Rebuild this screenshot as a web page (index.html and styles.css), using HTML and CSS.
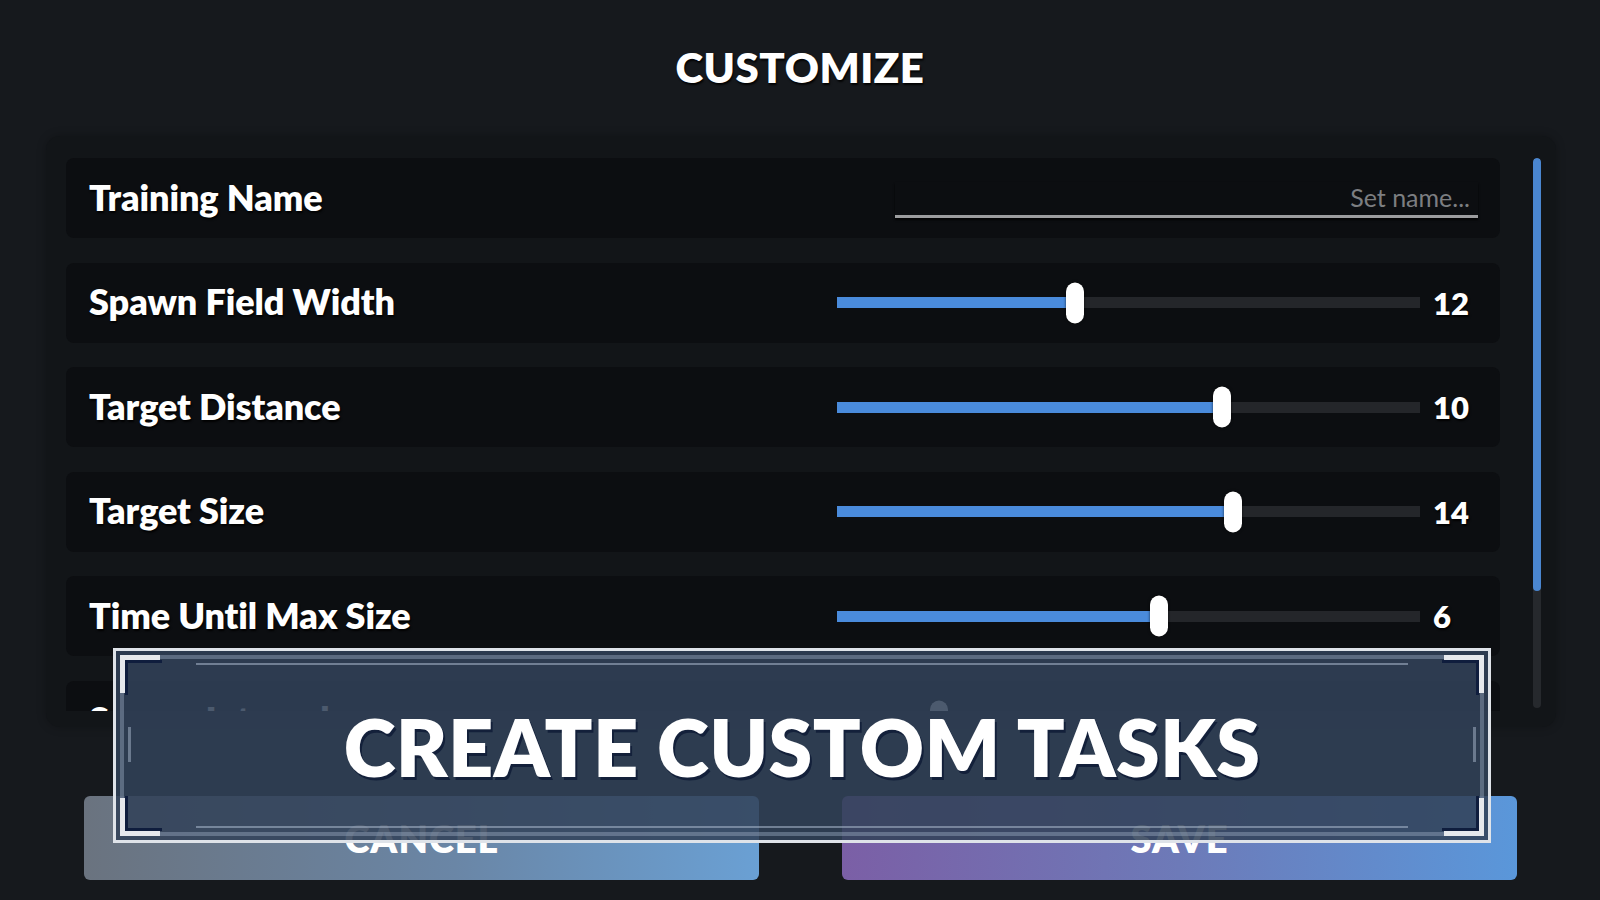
FILE: index.html
```html
<!DOCTYPE html>
<html lang="en">
<head>
<meta charset="utf-8">
<title>Customize</title>
<link rel="stylesheet" href="styles.css">
</head>
<body>
<div class="screen">
  <h1 class="title">CUSTOMIZE</h1>

  <div class="panel">
    <div class="list">
      <div class="row">
        <div class="label">Training Name</div>
        <div class="name-field"><input class="name-input" type="text" placeholder="Set name..."></div>
      </div>
      <div class="row">
        <div class="label">Spawn Field Width</div>
        <div class="slider"><div class="track"><div class="fill" style="width:40.8%"></div><div class="knob" style="left:40.8%"></div></div></div>
        <div class="value">12</div>
      </div>
      <div class="row">
        <div class="label">Target Distance</div>
        <div class="slider"><div class="track"><div class="fill" style="width:66%"></div><div class="knob" style="left:66%"></div></div></div>
        <div class="value">10</div>
      </div>
      <div class="row">
        <div class="label">Target Size</div>
        <div class="slider"><div class="track"><div class="fill" style="width:68%"></div><div class="knob" style="left:68%"></div></div></div>
        <div class="value">14</div>
      </div>
      <div class="row">
        <div class="label">Time Until Max Size</div>
        <div class="slider"><div class="track"><div class="fill" style="width:55.2%"></div><div class="knob" style="left:55.2%"></div></div></div>
        <div class="value">6</div>
      </div>
      <div class="row">
        <div class="label">Spawn Interval</div>
        <div class="slider"><div class="track"><div class="fill" style="width:17.5%"></div><div class="knob" style="left:17.5%"></div></div></div>
        <div class="value">3</div>
      </div>
    </div>
    <div class="scrollbar"><div class="thumb"></div></div>
  </div>

  <div class="actions">
    <button class="btn cancel">CANCEL</button>
    <button class="btn save">SAVE</button>
  </div>

  <div class="banner">
    <div class="banner-frame">
      <span class="corner tl"></span>
      <span class="corner tr"></span>
      <span class="corner bl"></span>
      <span class="corner br"></span>
      <span class="hline top"></span>
      <span class="hline bottom"></span>
      <span class="vmark left"></span>
      <span class="vmark right"></span>
      <div class="banner-text">CREATE CUSTOM TASKS</div>
    </div>
  </div>
</div>
</body>
</html>
```

FILE: styles.css
```css
* { box-sizing: border-box; }

html, body {
  margin: 0;
  padding: 0;
  background: #16191d;
}

.screen {
  position: relative;
  width: 1600px;
  height: 900px;
  overflow: hidden;
  padding-top: 46px;
  font-family: "Lato", "Noto Sans", sans-serif;
  color: #fff;
}

.title {
  margin: 0;
  height: 42px;
  font-size: 42px;
  line-height: 42px;
  font-weight: 800;
  text-align: center;
  letter-spacing: 0.5px;
  text-shadow: 1px 2px 2px rgba(0, 0, 0, 0.9);
}

.panel {
  margin: 48px 0 0 46px;
  width: 1510px;
  height: 591px;
  background: #121518;
  border-radius: 14px;
  box-shadow: 0 0 10px rgba(0, 0, 0, 0.25);
  padding: 22px 15px 0 20px;
  display: flex;
  align-items: flex-start;
}

.list {
  width: 1434px;
  height: 553px;
  overflow: hidden;
  display: flex;
  flex-direction: column;
  gap: 24.6px;
}

.row {
  flex: none;
  height: 80px;
  background: #0c0e11;
  border-radius: 8px;
  display: flex;
  align-items: center;
  padding-left: 23px;
}

.label {
  flex: 1;
  font-size: 36px;
  font-weight: 800;
  letter-spacing: -0.1px;
  text-shadow: 1px 2px 2px rgba(0, 0, 0, 0.9);
  white-space: nowrap;
  margin-top: -3px;
}

.name-field {
  width: 583px;
  margin-right: 22px;
  align-self: stretch;
  display: flex;
  align-items: flex-end;
  padding-bottom: 20px;
}

.name-input {
  width: 100%;
  background: transparent;
  border: none;
  border-bottom: 3px solid #9c9d9f;
  box-shadow: 0 2px 2px rgba(0, 0, 0, 0.8);
  outline: none;
  padding: 0 8px 3px 0;
  text-align: right;
  font-family: "Lato", "Noto Sans", sans-serif;
  font-size: 25px;
  color: #d0d0d0;
}

.name-input::placeholder {
  color: #7c7e81;
}

.slider {
  width: 583px;
}

.track {
  position: relative;
  height: 11px;
  background: #24262a;
}

.fill {
  position: absolute;
  left: 0;
  top: 0;
  bottom: 0;
  background: #4a8bdc;
}

.knob {
  position: absolute;
  top: 50%;
  width: 18px;
  height: 41px;
  transform: translate(-50%, -50%);
  background: #fff;
  border-radius: 9px;
  box-shadow: 0 0 3px rgba(0, 0, 0, 0.7);
}

.value {
  width: 80px;
  padding-left: 13px;
  font-size: 31px;
  font-weight: 800;
  text-shadow: 1px 2px 2px rgba(0, 0, 0, 0.9);
}

.scrollbar {
  margin-left: 33px;
  width: 8px;
  height: 550px;
  border-radius: 4px;
  background: #26292d;
  overflow: hidden;
}

.thumb {
  height: 433px;
  background: #4a86d0;
  border-radius: 4px;
}

.actions {
  display: flex;
  gap: 83px;
  padding-left: 84px;
  margin-top: 69px;
}

.btn {
  width: 675px;
  height: 84px;
  border: none;
  border-radius: 6px;
  font-family: "Lato", "Inter", sans-serif;
  font-size: 38px;
  font-weight: 800;
  color: #fff;
  letter-spacing: 1px;
  padding: 0;
}

.cancel {
  background: linear-gradient(90deg, #6a737f 0%, #6a86a6 55%, #6aa0d4 100%);
}

.save {
  background: linear-gradient(90deg, #7b5fa6 0%, #6d7ab8 50%, #5a97da 100%);
}

/* overlay banner */
.banner {
  position: absolute;
  left: 113px;
  top: 648px;
  width: 1378px;
  height: 195px;
  border: 3px solid #dfe3e9;
  background: rgba(49, 66, 89, 0.87);
  padding: 4px;
}

.banner-frame {
  position: relative;
  height: 100%;
  border: 4px solid rgba(150, 166, 188, 0.45);
  display: flex;
  align-items: center;
  justify-content: center;
}

.corner {
  position: absolute;
  width: 40px;
  height: 38px;
  border-color: #e6e8ec;
  border-style: solid;
  border-width: 0;
}

.corner::after {
  content: "";
  position: absolute;
  width: 34px;
  height: 32px;
  border-color: #0f1d3d;
  border-style: solid;
  border-width: 0;
}

.corner.tl { left: -4px; top: -4px; border-left-width: 5px; border-top-width: 5px; }
.corner.tl::after { left: 0; top: 0; border-left-width: 3px; border-top-width: 3px; }
.corner.tr { right: -4px; top: -4px; border-right-width: 5px; border-top-width: 5px; }
.corner.tr::after { right: 0; top: 0; border-right-width: 3px; border-top-width: 3px; }
.corner.bl { left: -4px; bottom: -4px; border-left-width: 5px; border-bottom-width: 5px; }
.corner.bl::after { left: 0; bottom: 0; border-left-width: 3px; border-bottom-width: 3px; }
.corner.br { right: -4px; bottom: -4px; border-right-width: 5px; border-bottom-width: 5px; }
.corner.br::after { right: 0; bottom: 0; border-right-width: 3px; border-bottom-width: 3px; }

.hline {
  position: absolute;
  left: 72px;
  right: 72px;
  height: 2px;
  background: rgba(170, 184, 204, 0.55);
}

.hline.top { top: 4px; }
.hline.bottom { bottom: 4px; }

.vmark {
  position: absolute;
  top: 68px;
  width: 3px;
  height: 35px;
  background: rgba(170, 184, 204, 0.5);
}

.vmark.left { left: 4px; }
.vmark.right { right: 4px; }

.banner-text {
  font-family: "Lato", "Inter", sans-serif;
  font-size: 79px;
  font-weight: 800;
  line-height: 1;
  letter-spacing: 0.3px;
  color: #fff;
  text-shadow: 2px 3px 0 #13203a;
  white-space: nowrap;
  margin-top: 2px;
}
```
